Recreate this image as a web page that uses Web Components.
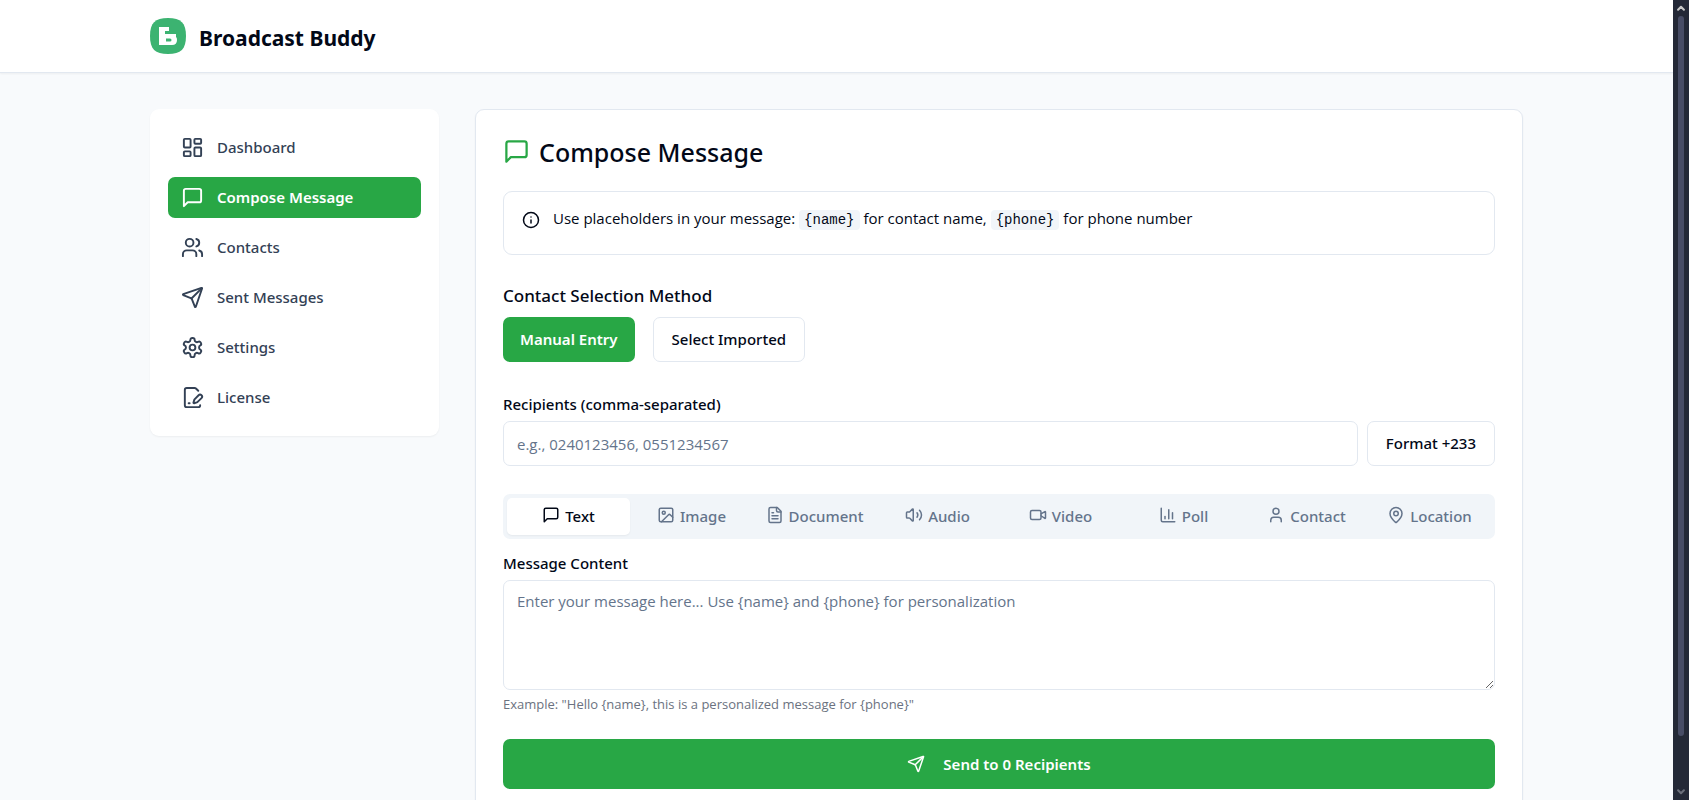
<!DOCTYPE html>
<html lang="en">
<head>
<meta charset="UTF-8">
<meta name="viewport" content="width=device-width, initial-scale=1.0">
<title>Broadcast Buddy</title>
<style>
  :root {
    --primary: #28a745;
    --text: #020817;
    --muted: #64748b;
    --nav-text: #334155;
    --border: #e2e8f0;
    --soft: #f1f5f9;
    --page: #f8fafc;
    --copy-font: 'Open Sans', 'Noto Sans', sans-serif;
  }

  body {
    margin: 0;
    font-family: 'Noto Sans', 'Open Sans', sans-serif;
    font-size: 15px;
    line-height: 23px;
    color: var(--text);
    background: var(--page);
  }
</style>
</head>
<body>
<broadcast-app>
  <app-header slot="header">Broadcast Buddy</app-header>
  <app-nav slot="nav"></app-nav>
  <compose-card></compose-card>
</broadcast-app>

<script>
// Icon shapes on a 24px grid
const ICONS = {
  dashboard: '<rect width="7" height="9" x="3" y="3" rx="1"/><rect width="7" height="5" x="14" y="3" rx="1"/><rect width="7" height="9" x="14" y="12" rx="1"/><rect width="7" height="5" x="3" y="16" rx="1"/>',
  message: '<path d="M21 15a2 2 0 0 1-2 2H7l-4 4V5a2 2 0 0 1 2-2h14a2 2 0 0 1 2 2z"/>',
  users: '<path d="M16 21v-2a4 4 0 0 0-4-4H6a4 4 0 0 0-4 4v2"/><circle cx="9" cy="7" r="4"/><path d="M22 21v-2a4 4 0 0 0-3-3.87"/><path d="M16 3.13a4 4 0 0 1 0 7.75"/>',
  send: '<path d="M14.536 21.686a.5.5 0 0 0 .937-.024l6.5-19a.496.496 0 0 0-.635-.635l-19 6.5a.5.5 0 0 0-.024.937l7.93 3.18a2 2 0 0 1 1.112 1.11z"/><path d="m21.854 2.147-10.94 10.939"/>',
  settings: '<path d="M12.22 2h-.44a2 2 0 0 0-2 2v.18a2 2 0 0 1-1 1.73l-.43.25a2 2 0 0 1-2 0l-.15-.08a2 2 0 0 0-2.73.73l-.22.38a2 2 0 0 0 .73 2.73l.15.1a2 2 0 0 1 1 1.72v.51a2 2 0 0 1-1 1.74l-.15.09a2 2 0 0 0-.73 2.73l.22.38a2 2 0 0 0 2.73.73l.15-.08a2 2 0 0 1 2 0l.43.25a2 2 0 0 1 1 1.73V20a2 2 0 0 0 2 2h.44a2 2 0 0 0 2-2v-.18a2 2 0 0 1 1-1.73l.43-.25a2 2 0 0 1 2 0l.15.08a2 2 0 0 0 2.73-.73l.22-.39a2 2 0 0 0-.73-2.73l-.15-.08a2 2 0 0 1-1-1.74v-.5a2 2 0 0 1 1-1.74l.15-.09a2 2 0 0 0 .73-2.73l-.22-.38a2 2 0 0 0-2.73-.73l-.15.08a2 2 0 0 1-2 0l-.43-.25a2 2 0 0 1-1-1.73V4a2 2 0 0 0-2-2z"/><circle cx="12" cy="12" r="3"/>',
  license: '<path d="m18 5-2.414-2.414A2 2 0 0 0 14.172 2H6a2 2 0 0 0-2 2v16a2 2 0 0 0 2 2h12a2 2 0 0 0 2-2"/><path d="M21.378 12.626a1 1 0 0 0-3.004-3.004l-4.01 4.012a2 2 0 0 0-.506.854l-.837 2.87a.5.5 0 0 0 .62.62l2.87-.837a2 2 0 0 0 .854-.506z"/><path d="M8 18h1"/>',
  info: '<circle cx="12" cy="12" r="10"/><path d="M12 16v-4"/><path d="M12 8h.01"/>',
  image: '<rect width="18" height="18" x="3" y="3" rx="2"/><circle cx="9" cy="9" r="2"/><path d="m21 15-3.086-3.086a2 2 0 0 0-2.828 0L6 21"/>',
  document: '<path d="M15 2H6a2 2 0 0 0-2 2v16a2 2 0 0 0 2 2h12a2 2 0 0 0 2-2V7Z"/><path d="M14 2v4a2 2 0 0 0 2 2h4"/><path d="M10 9H8"/><path d="M16 13H8"/><path d="M16 17H8"/>',
  audio: '<path d="M11 4.702a.705.705 0 0 0-1.203-.498L6.413 7.587A1.4 1.4 0 0 1 5.416 8H3a1 1 0 0 0-1 1v6a1 1 0 0 0 1 1h2.416a1.4 1.4 0 0 1 .997.413l3.383 3.384A.705.705 0 0 0 11 19.298z"/><path d="M16 9a5 5 0 0 1 0 6"/><path d="M19.364 18.364a9 9 0 0 0 0-12.728"/>',
  video: '<path d="m16 13 5.223 3.482a.5.5 0 0 0 .777-.416V7.87a.5.5 0 0 0-.752-.432L16 10.5"/><rect x="2" y="6" width="14" height="12" rx="2"/>',
  poll: '<path d="M3 3v16a2 2 0 0 0 2 2h16"/><path d="M8 17v-3"/><path d="M13 17V5"/><path d="M18 17V9"/>',
  contact: '<path d="M19 21v-2a4 4 0 0 0-4-4H9a4 4 0 0 0-4 4v2"/><circle cx="12" cy="7" r="4"/>',
  location: '<path d="M20 10c0 4.993-5.539 10.193-7.399 11.799a1 1 0 0 1-1.202 0C9.539 20.193 4 14.993 4 10a8 8 0 0 1 16 0"/><circle cx="12" cy="10" r="3"/>',
  up: '<path stroke-width="5" d="m5 16 7-7 7 7"/>',
  down: '<path stroke-width="5" d="m5 8 7 7 7-7"/>'
};

class LineIcon extends HTMLElement {
  connectedCallback() {
    if (!this.shadowRoot) this.attachShadow({ mode: 'open' });
    this.shadowRoot.innerHTML = `
      <style>
        :host { display: inline-flex; flex: none; width: var(--icon-size, 18px); height: var(--icon-size, 18px); }
        svg { width: 100%; height: 100%; }
      </style>
      <svg viewBox="0 0 24 24" fill="none" stroke="currentColor" stroke-width="2"
        stroke-linecap="round" stroke-linejoin="round" aria-hidden="true">${ICONS[this.getAttribute('name')]}</svg>
    `;
  }
}

// Page frame: header, sidebar, content and the scroll track
class BroadcastApp extends HTMLElement {
  constructor() {
    super();
    this.attachShadow({ mode: 'open' }).innerHTML = `
      <style>
        :host { display: grid; grid-template-columns: minmax(0, 1fr) 16px; height: 100vh; overflow: hidden; }
        .page { overflow: hidden; }
        .columns {
          display: flex;
          align-items: flex-start;
          gap: 36px;
          max-width: 1373px;
          margin: 36px auto;
        }
        ::slotted([slot="nav"]) { flex: 0 0 289px; }
        main { flex: 1; min-width: 0; }
        .track {
          display: flex;
          flex-direction: column;
          align-items: center;
          justify-content: space-between;
          background: #242937;
          color: #c8c8c8;
          --icon-size: 10px;
          padding: 3px 0;
        }
        .thumb { flex: 1; width: 6px; margin: 3px 0 51px; border-radius: 3px; background: #484d66; }
        .down { color: #6b6f7b; }
      </style>
      <div class="page">
        <slot name="header"></slot>
        <div class="columns">
          <slot name="nav"></slot>
          <main><slot></slot></main>
        </div>
      </div>
      <div class="track" aria-hidden="true">
        <line-icon name="up"></line-icon>
        <div class="thumb"></div>
        <line-icon class="down" name="down"></line-icon>
      </div>
    `;
  }
}

class AppHeader extends HTMLElement {
  constructor() {
    super();
    this.attachShadow({ mode: 'open' }).innerHTML = `
      <style>
        :host { display: block; background: #fff; border-bottom: 1px solid var(--border); box-shadow: 0 1px 2px rgba(0, 0, 0, 0.05); }
        header { display: flex; align-items: center; gap: 13px; height: 72px; max-width: 1373px; margin: 0 auto; }
        svg { width: 36px; height: 36px; }
        h1 { margin: 3px 0 0; font-size: 21px; line-height: 28px; font-weight: 700; }
      </style>
      <header>
        <svg viewBox="0 0 36 36" aria-hidden="true">
          <path fill="#3cb371" d="M18 0C31 0 36 5 36 18S31 36 18 36 0 31 0 18 5 0 18 0Z"/>
          <path fill="#fff" fill-rule="evenodd" d="M9 9H19V13H15V16H26V19Q27 19.500 27 22Q27 27 22 27H9ZM16 20.500V23.500H20Q21.500 23.500 21.500 22T20 20.500Z"/>
        </svg>
        <h1><slot></slot></h1>
      </header>
    `;
  }
}

class AppNav extends HTMLElement {
  constructor() {
    super();
    this.attachShadow({ mode: 'open' });
    this.activeItem = 'compose';
    this.items = [
      ['dashboard', 'dashboard', 'Dashboard'],
      ['compose', 'message', 'Compose Message'],
      ['contacts', 'users', 'Contacts'],
      ['sent', 'send', 'Sent Messages'],
      ['settings', 'settings', 'Settings'],
      ['license', 'license', 'License']
    ];
  }

  connectedCallback() {
    this.render();
  }

  render() {
    this.shadowRoot.innerHTML = `
      <style>
        :host { display: block; }
        nav {
          display: flex;
          flex-direction: column;
          gap: 9px;
          padding: 18px;
          border-radius: 9px;
          background: #fff;
          box-shadow: 0 1px 2px rgba(0, 0, 0, 0.05);
        }
        a {
          display: flex;
          align-items: center;
          gap: 13px;
          padding: 9px 13px;
          border-radius: 7px;
          color: var(--nav-text);
          font-weight: 500;
          text-decoration: none;
          --icon-size: 23px;
        }
        a.active { background: var(--primary); color: #fff; font-weight: 600; }
      </style>
      <nav>
        ${this.items.map(([page, icon, label]) => `
          <a href="#${page}" class="${page === this.activeItem ? 'active' : ''}" data-page="${page}">
            <line-icon name="${icon}"></line-icon><span>${label}</span>
          </a>`).join('')}
      </nav>
    `;

    this.shadowRoot.querySelectorAll('a').forEach(item => {
      item.addEventListener('click', () => {
        this.activeItem = item.dataset.page;
        this.render();
      });
    });
  }
}

class AppButton extends HTMLElement {
  constructor() {
    super();
    this.attachShadow({ mode: 'open' }).innerHTML = `
      <style>
        :host { display: block; }
        button {
          display: flex;
          align-items: center;
          justify-content: center;
          gap: 18px;
          width: 100%;
          height: 45px;
          padding: 0 18px;
          border: 1px solid var(--border);
          border-radius: 7px;
          background: #fff;
          color: inherit;
          font: inherit;
          font-weight: 500;
          cursor: pointer;
        }
        :host([primary]) button { padding: 0 17px; border: 0; background: var(--primary); color: #fff; font-weight: 600; }
        :host([large]) button { height: 50px; }
      </style>
      <button type="button"><slot></slot></button>
    `;
  }
}

class MessageTabs extends HTMLElement {
  constructor() {
    super();
    this.attachShadow({ mode: 'open' });
    this.active = 'Text';
    this.tabs = [
      ['message', 'Text'], ['image', 'Image'], ['document', 'Document'], ['audio', 'Audio'],
      ['video', 'Video'], ['poll', 'Poll'], ['contact', 'Contact'], ['location', 'Location']
    ];
  }

  connectedCallback() {
    this.render();
  }

  render() {
    this.shadowRoot.innerHTML = `
      <style>
        :host { display: block; }
        div { display: grid; grid-template-columns: repeat(8, 1fr); padding: 4px; border-radius: 7px; background: var(--soft); }
        button {
          display: flex;
          align-items: center;
          justify-content: center;
          gap: 5px;
          height: 37px;
          padding: 0;
          border: 0;
          border-radius: 5px;
          background: none;
          color: var(--muted);
          font: inherit;
          font-weight: 500;
          cursor: pointer;
        }
        button[aria-selected="true"] { background: #fff; color: var(--text); box-shadow: 0 1px 2px rgba(0, 0, 0, 0.05); }
        line-icon { margin-bottom: 3px; }
      </style>
      <div role="tablist">
        ${this.tabs.map(([icon, label]) => `
          <button type="button" role="tab" aria-selected="${label === this.active}" data-tab="${label}">
            <line-icon name="${icon}"></line-icon>${label}
          </button>`).join('')}
      </div>
    `;

    this.shadowRoot.querySelectorAll('button').forEach(tab => {
      tab.addEventListener('click', () => {
        this.active = tab.dataset.tab;
        this.render();
      });
    });
  }
}

class ComposeCard extends HTMLElement {
  constructor() {
    super();
    this.attachShadow({ mode: 'open' }).innerHTML = `
      <style>
        :host {
          display: block;
          padding: 26px 27px;
          border: 1px solid var(--border);
          border-radius: 9px;
          background: #fff;
          box-shadow: 0 1px 2px rgba(0, 0, 0, 0.05);
        }
        h2 { display: flex; align-items: center; gap: 9px; margin: 0 0 23px; font-size: 25px; line-height: 32px; font-weight: 500; }
        h2 line-icon { --icon-size: 27px; margin-bottom: 2px; color: var(--primary); }
        .alert {
          display: flex;
          align-items: center;
          gap: 13px;
          padding: 15px 18px 22px;
          border: 1px solid var(--border);
          border-radius: 9px;
          font-family: var(--copy-font);
        }
        code {
          padding: 2px 5px;
          border-radius: 4px;
          background: var(--soft);
          font-family: 'Liberation Mono', monospace;
          font-size: 14px;
        }
        h3 { margin: 29px 0 9px; font-size: 17px; line-height: 24px; font-weight: 500; }
        .row { display: flex; gap: 18px; }
        .recipients { gap: 9px; margin-bottom: 28px; }
        label { display: block; margin: 31px 0 5px; font-weight: 500; }
        message-tabs + label { margin-top: 13px; }
        input, textarea {
          display: block;
          box-sizing: border-box;
          width: 100%;
          min-width: 0;
          margin: 0;
          padding: 9px 13px;
          border: 1px solid var(--border);
          border-radius: 7px;
          background: #fff;
          color: inherit;
          font: inherit;
          font-family: var(--copy-font);
        }
        input { height: 45px; flex: 1; }
        textarea { height: 110px; resize: vertical; }
        ::placeholder { color: var(--muted); opacity: 1; }
        .hint { margin: 4px 0 25px; font-family: var(--copy-font); font-size: 13px; line-height: 20px; color: #6b7280; }
      </style>
      <h2><line-icon name="message"></line-icon>Compose Message</h2>
      <div class="alert">
        <line-icon name="info"></line-icon>
        <div>Use placeholders in your message: <code>{name}</code> for contact name, <code>{phone}</code> for phone number</div>
      </div>
      <h3>Contact Selection Method</h3>
      <div class="row">
        <app-button primary>Manual Entry</app-button>
        <app-button>Select Imported</app-button>
      </div>
      <label for="recipients">Recipients (comma-separated)</label>
      <div class="row recipients">
        <input id="recipients" type="text" placeholder="e.g., 0240123456, 0551234567">
        <app-button>Format +233</app-button>
      </div>
      <message-tabs></message-tabs>
      <label for="content">Message Content</label>
      <textarea id="content" placeholder="Enter your message here... Use {name} and {phone} for personalization"></textarea>
      <p class="hint">Example: "Hello {name}, this is a personalized message for {phone}"</p>
      <app-button primary large><line-icon name="send"></line-icon>Send to 0 Recipients</app-button>
    `;
  }
}

customElements.define('line-icon', LineIcon);
customElements.define('broadcast-app', BroadcastApp);
customElements.define('app-header', AppHeader);
customElements.define('app-nav', AppNav);
customElements.define('app-button', AppButton);
customElements.define('message-tabs', MessageTabs);
customElements.define('compose-card', ComposeCard);
</script>
</body>
</html>
